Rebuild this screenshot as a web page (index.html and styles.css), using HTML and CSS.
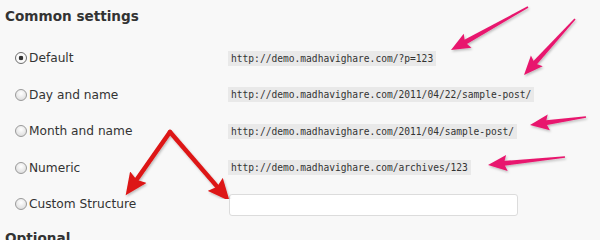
FILE: index.html
```html
<!DOCTYPE html>
<html>
<head>
<meta charset="utf-8">
<link rel="stylesheet" href="styles.css">
</head>
<body>
<div class="page">
  <h3 class="heading">Common settings</h3>
  <div class="options">
    <label class="opt"><span class="radio checked"></span>Default</label>
    <code class="sample">http://demo.madhavighare.com/?p=123</code>
    <label class="opt"><span class="radio"></span>Day and name</label>
    <code class="sample">http://demo.madhavighare.com/2011/04/22/sample-post/</code>
    <label class="opt"><span class="radio"></span>Month and name</label>
    <code class="sample">http://demo.madhavighare.com/2011/04/sample-post/</code>
    <label class="opt"><span class="radio"></span>Numeric</label>
    <code class="sample">http://demo.madhavighare.com/archives/123</code>
    <label class="opt"><span class="radio"></span>Custom Structure</label>
    <div class="field"><input class="text-input" type="text"></div>
  </div>
  <h3 class="heading optional">Optional</h3>
  <svg class="annotations" width="600" height="240" viewBox="0 0 600 240">
    <defs>
      <marker id="redHead" markerUnits="userSpaceOnUse" markerWidth="24" markerHeight="20" refX="4" refY="10" orient="auto">
        <path d="M0,0 L22,10 L0,20 L3,10 z" fill="#dd1515"/>
      </marker>
      <filter id="sh" x="-20%" y="-20%" width="140%" height="140%">
        <feDropShadow dx="1" dy="1.5" stdDeviation="1.2" flood-color="#000" flood-opacity="0.25"/>
      </filter>
    </defs>
    <g filter="url(#sh)" fill="#e8186e">
      <polygon points="528.4,7.7 464.4,45.4 462.0,41.0 527.6,6.3"/>
      <polygon points="451,50 471.5,47.7 465.0,42.2 463.7,33.7"/>
      <polygon points="575.6,19.5 535.3,66.3 531.5,62.9 574.4,18.5"/>
      <polygon points="524,75 542.7,66.3 534.8,63.2 530.9,55.5"/>
      <polygon points="586.1,117.8 544.3,125.5 543.5,120.5 585.9,116.2"/>
      <polygon points="530,125 549.9,130.2 545.8,122.7 547.7,114.4"/>
      <polygon points="565.1,157.8 502.2,166.1 501.6,161.1 564.9,156.2"/>
      <polygon points="488,165 507.7,171.0 503.9,163.4 506.1,155.0"/>
    </g>
    <g filter="url(#sh)" stroke="#dd1515" stroke-width="4.5" stroke-linecap="round">
      <line x1="170" y1="132" x2="136" y2="180.5" marker-end="url(#redHead)"/>
      <line x1="170" y1="132" x2="217.8" y2="187.4" marker-end="url(#redHead)"/>
    </g>
  </svg>
</div>
</body>
</html>
```
FILE: styles.css
```css
html, body {
  margin: 0;
  padding: 0;
  background: #f8f8f8;
}
.page {
  position: relative;
  width: 600px;
  height: 240px;
  overflow: hidden;
  font-family: "DejaVu Sans", "Liberation Sans", sans-serif;
  color: #333;
}
.heading {
  margin: 0;
  padding: 6px 0 0 5px;
  font-size: 13.6px;
  font-weight: bold;
  line-height: 20px;
  color: #333;
}
.options {
  display: grid;
  grid-template-columns: 228px 1fr;
  grid-auto-rows: 36.5px;
  align-items: center;
  margin-top: 14px;
}
.opt {
  display: flex;
  align-items: center;
  gap: 2px;
  padding-left: 15px;
  font-size: 12.2px;
  color: #333;
}
.radio {
  width: 12px;
  height: 12px;
  box-sizing: border-box;
  border-radius: 50%;
  border: 1px solid #9a9a9a;
  background: radial-gradient(circle at 50% 35%, #ffffff 0%, #e2e2e2 70%, #cfcfcf 100%);
}
.radio.checked {
  border-color: #6e6e6e;
  background: radial-gradient(circle, #333 0 2px, #fafafa 2.6px);
}
.sample {
  justify-self: start;
  font-family: "DejaVu Sans Mono", "Liberation Mono", monospace;
  font-size: 9.6px;
  line-height: 15px;
  padding: 0 3px;
  background: #e9e9e9;
  color: #333;
}
.field {
  display: flex;
  padding-left: 1px;
}
.text-input {
  width: 289px;
  height: 22px;
  box-sizing: border-box;
  border: 1px solid #dcdcdc;
  border-radius: 3px;
  background: #fff;
  margin: 2px 0 0 0;
}
.optional {
  padding-top: 5px;
}
.annotations {
  position: absolute;
  left: 0;
  top: 0;
  pointer-events: none;
}
```
